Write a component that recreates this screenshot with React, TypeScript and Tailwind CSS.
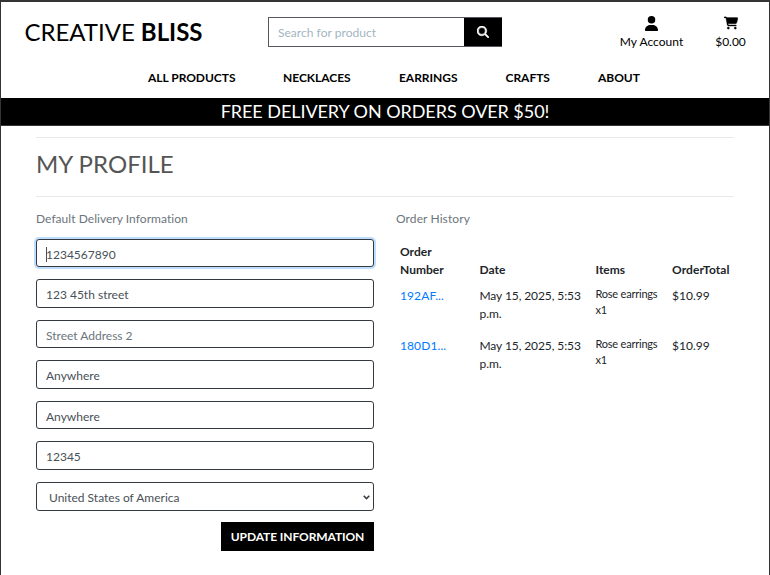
import React from "react";
import { FaCartShopping, FaMagnifyingGlass, FaUser } from "react-icons/fa6";

const fieldBox =
  "block w-full h-[28.5px] rounded-[3px] border border-[#343a40] bg-white px-[9px] pt-[2px] text-[12px] leading-[18px] text-[#495057] outline-none placeholder:text-[#6c757d]";

const fields = [
  { name: "street1", value: "123 45th street", placeholder: "Street Address 1" },
  { name: "street2", value: "", placeholder: "Street Address 2" },
  { name: "town", value: "Anywhere", placeholder: "Town or City" },
  { name: "county", value: "Anywhere", placeholder: "County" },
  { name: "postcode", value: "12345", placeholder: "Postal Code" },
];

const orders = [
  { number: "192AF...", date: "May 15, 2025, 5:53 p.m.", total: "$10.99" },
  { number: "180D1...", date: "May 15, 2025, 5:53 p.m.", total: "$10.99" },
];

function Header() {
  return (
    <header className="h-[96px] text-black">
      <div className="flex h-[60px] items-start">
        <a className="ml-[23.5px] mt-[12px] w-[243.5px] whitespace-nowrap text-[24px] leading-[36px] tracking-[-0.03px]">
          CREATIVE <strong className="font-bold">BLISS</strong>
        </a>
        <div className="mt-[15px] flex h-[29.5px] w-[234px] border border-[#55585c]">
          <input
            className="min-w-0 flex-1 bg-white px-[9px] pt-[2px] text-[12px] tracking-[0.03px] outline-none placeholder:text-[#a3b5c0]"
            placeholder="Search for product"
          />
          <button className="-mr-px flex w-[38px] items-center justify-center bg-black text-white">
            <FaMagnifyingGlass size={12} stroke="white" strokeWidth={22} />
          </button>
        </div>
        <a className="ml-[115.5px] mt-[14px] flex w-[68px] flex-col items-center whitespace-nowrap text-[12px] leading-[18px] tracking-[0.03px]">
          <FaUser size={15} />
          <span className="mt-[2px]">My Account</span>
        </a>
        <a className="ml-[28px] mt-[14px] flex w-[34px] flex-col items-center text-[12px] leading-[18px] tracking-[-0.03px]">
          <FaCartShopping size={14} stroke="black" strokeWidth={12} />
          <span className="mt-[3px]">$0.00</span>
        </a>
      </div>
      <nav className="flex pl-[147px] pt-[7px] text-[12px] font-bold leading-[18px] tracking-[-0.03px] whitespace-nowrap">
        <a className="w-[135px]">ALL PRODUCTS</a>
        <a className="w-[116px]">NECKLACES</a>
        <a className="w-[106.5px]">EARRINGS</a>
        <a className="w-[92.5px]">CRAFTS</a>
        <a>ABOUT</a>
      </nav>
    </header>
  );
}

function DeliveryForm() {
  return (
    <form className="w-[338px]">
      <p className="text-[12px] leading-[18px] tracking-[0.04px] text-[#6c757d]">Default Delivery Information</p>
      <div className="mt-[10.75px] flex flex-col gap-[12.05px]">
        <div className={fieldBox + " flex items-center shadow-[0_0_0_2px_#bfdeff]"}>
          <span className="h-[15px] w-px bg-[#495057]" />
          <span className="-ml-px mt-px">1234567890</span>
        </div>
        {fields.map((f) => (
          <input key={f.name} className={fieldBox} defaultValue={f.value} placeholder={f.placeholder} />
        ))}
        <div className={fieldBox + " flex items-center justify-between pl-[12px] pr-[3px]"}>
          <span className="mt-px">United States of America</span>
          <svg width="7" height="5" viewBox="0 0 7 5" fill="none" stroke="#343a40" strokeWidth="1.5">
            <path d="M.7.8 3.5 3.6 6.3.8" />
          </svg>
        </div>
      </div>
      <button
        type="button"
        className="mt-[11.5px] ml-auto block h-[28.5px] w-[153px] whitespace-nowrap bg-black pt-px text-[12px] font-bold tracking-[-0.09px] text-white"
      >
        UPDATE INFORMATION
      </button>
    </form>
  );
}

function OrderHistory() {
  return (
    <section className="ml-[22px] w-[338px] text-[12px] leading-[18px] text-[#212529]">
      <p className="tracking-[0.1px] text-[#6c757d]">Order History</p>
      <div className="mt-[15px] grid grid-cols-[79.5px_116px_76.5px_60px] pl-[4px]">
        <b>
          Order
          <br />
          Number
        </b>
        <b className="self-end">Date</b>
        <b className="self-end">Items</b>
        <b className="self-end tracking-[0.1px]">OrderTotal</b>
        {orders.map((o) => (
          <React.Fragment key={o.number}>
            <a className="mt-[8px] h-[42px] tracking-[0.1px] text-[#007bff]">{o.number}</a>
            <span className="mt-[8px] w-[108px] tracking-[-0.09px]">{o.date}</span>
            <span className="mt-[7px] whitespace-nowrap text-[11px] leading-[16px] tracking-[-0.22px]">
              Rose earrings
              <br />
              x1
            </span>
            <span className="mt-[8px]">{o.total}</span>
          </React.Fragment>
        ))}
      </div>
    </section>
  );
}

export default function App() {
  return (
    <div className="h-[575px] w-[770px] overflow-hidden border-x border-t-2 border-[#353334] bg-white font-['Lato',sans-serif]">
      <Header />
      <div className="h-[28px] border-b border-[#353334] bg-black text-center text-[18px] leading-[27px] tracking-[-0.06px] text-white">
        FREE DELIVERY ON ORDERS OVER $50!
      </div>
      <main className="px-[35px] pt-[11px]">
        <hr className="border-[#e9e9e9]" />
        <h2 className="mt-[11px] h-[47px] text-[24px] leading-[29px] tracking-[0.03px] text-[#555]">MY PROFILE</h2>
        <hr className="border-[#e9e9e9]" />
        <div className="mt-[13px] flex">
          <DeliveryForm />
          <OrderHistory />
        </div>
      </main>
    </div>
  );
}
